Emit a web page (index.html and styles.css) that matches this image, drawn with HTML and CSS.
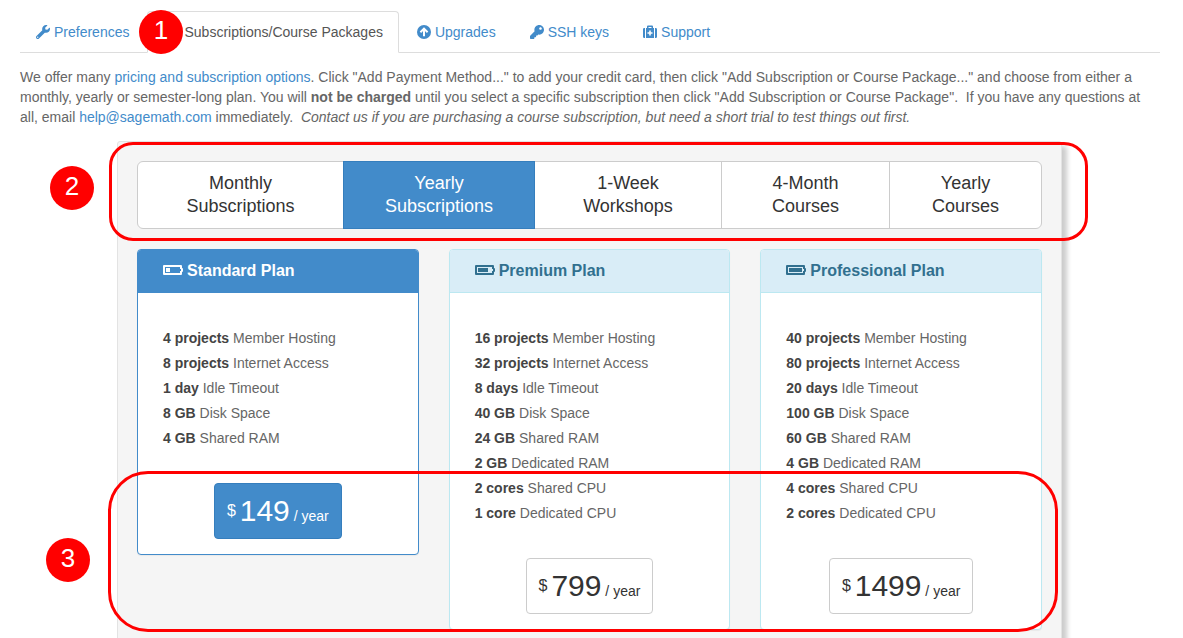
FILE: index.html
```html
<!DOCTYPE html>
<html lang="en">
<head>
<meta charset="utf-8">
<title>Subscriptions/Course Packages</title>
<link rel="stylesheet" href="styles.css">
</head>
<body>
<nav class="tabs">
  <a class="tab" href="#preferences"><svg class="icon" viewBox="0 0 512 512"><path d="M507.73 109.1c-2.24-9.03-13.54-12.09-20.12-5.51l-74.36 74.36-67.88-11.31-11.31-67.88 74.36-74.36c6.62-6.62 3.43-17.9-5.66-20.16-47.38-11.74-99.55.91-136.58 37.93-39.64 39.64-50.55 97.1-34.05 147.2L18.74 402.76c-24.99 24.99-24.99 65.51 0 90.5 24.99 24.99 65.51 24.99 90.5 0l213.21-213.21c50.12 16.71 107.47 5.68 147.37-34.22 37.07-37.07 49.7-89.32 37.91-136.73zM64 472c-13.25 0-24-10.75-24-24 0-13.26 10.75-24 24-24s24 10.74 24 24c0 13.25-10.75 24-24 24z"/></svg>Preferences</a>
  <a class="tab active" href="#subscriptions">Subscriptions/Course Packages</a>
  <a class="tab" href="#upgrades"><svg class="icon" viewBox="0 0 14 14"><circle cx="7" cy="7" r="7"/><path class="cut" d="M7 11.2V4M3.4 7.2L7 3.6l3.600 3.600"/></svg>Upgrades</a>
  <a class="tab" href="#ssh"><svg class="icon" viewBox="0 0 512 512"><path d="M512 176.001C512 273.203 433.202 352 336 352c-11.22 0-22.19-1.062-32.827-3.069l-24.012 27.014A23.999 23.999 0 0 1 261.223 384H224v40c0 13.255-10.745 24-24 24h-40v40c0 13.255-10.745 24-24 24H24c-13.255 0-24-10.745-24-24v-78.059c0-6.365 2.529-12.47 7.029-16.971l161.802-161.802C163.108 213.814 160 195.271 160 176 160 78.798 238.797.001 335.999 0 433.488-.001 512 78.511 512 176.001zM336 128c0 26.51 21.49 48 48 48s48-21.49 48-48-21.49-48-48-48-48 21.49-48 48z"/></svg>SSH keys</a>
  <a class="tab" href="#support"><svg class="icon" viewBox="0 0 14 14"><path fill-rule="evenodd" d="M1.300 3H2v10H1.300Q0 13 0 11.700V4.300Q0 3 1.300 3zM12 3h.7Q14 3 14 4.300v7.400Q14 13 12.700 13H12zM3 3h1V1.500Q4 .5 5 .5h4q1 0 1 1V3h1v10H3zM5.500 3h3V2h-3zM6.200 5.500v1.700H4.500v1.600h1.700v1.700h1.600V8.800h1.700V7.200H7.800V5.500z"/></svg>Support</a>
</nav>

<p class="intro">We offer many <a href="#pricing">pricing and subscription options</a>. Click "Add Payment Method..." to add your credit card, then click "Add Subscription or Course Package..." and choose from either a monthly, yearly or semester-long plan. You will <b>not be charged</b> until you select a specific subscription then click "Add Subscription or Course Package".&nbsp; If you have any questions at all, email <a href="mailto:help@sagemath.com">help@sagemath.com</a> immediately.&nbsp; <i>Contact us if you are purchasing a course subscription, but need a short trial to test things out first.</i></p>

<main class="well">
  <div class="periods">
    <button type="button">Monthly<br>Subscriptions</button>
    <button type="button" class="selected">Yearly<br>Subscriptions</button>
    <button type="button">1-Week<br>Workshops</button>
    <button type="button">4-Month<br>Courses</button>
    <button type="button">Yearly<br>Courses</button>
  </div>

  <div class="plans">
    <section class="plan chosen">
      <h2><svg class="battery" viewBox="0 0 20 10"><path fill-rule="evenodd" d="M1 0h17q1 0 1 1v2q1 0 1 1v2q0 1-1 1v2q0 1-1 1H1Q0 10 0 9V1Q0 0 1 0zM2 2v6h15V6h1V4h-1V2z"/><rect x="3" y="3" width="4" height="4"/></svg>Standard Plan</h2>
      <ul>
        <li><b>4 projects</b> Member Hosting</li>
        <li><b>8 projects</b> Internet Access</li>
        <li><b>1 day</b> Idle Timeout</li>
        <li><b>8 GB</b> Disk Space</li>
        <li><b>4 GB</b> Shared RAM</li>
      </ul>
      <button type="button" class="price"><span class="currency">$</span> <span class="amount">149</span> / year</button>
    </section>
    <section class="plan">
      <h2><svg class="battery" viewBox="0 0 20 10"><path fill-rule="evenodd" d="M1 0h17q1 0 1 1v2q1 0 1 1v2q0 1-1 1v2q0 1-1 1H1Q0 10 0 9V1Q0 0 1 0zM2 2v6h15V6h1V4h-1V2z"/><rect x="3" y="3" width="10" height="4"/></svg>Premium Plan</h2>
      <ul>
        <li><b>16 projects</b> Member Hosting</li>
        <li><b>32 projects</b> Internet Access</li>
        <li><b>8 days</b> Idle Timeout</li>
        <li><b>40 GB</b> Disk Space</li>
        <li><b>24 GB</b> Shared RAM</li>
        <li><b>2 GB</b> Dedicated RAM</li>
        <li><b>2 cores</b> Shared CPU</li>
        <li><b>1 core</b> Dedicated CPU</li>
      </ul>
      <button type="button" class="price"><span class="currency">$</span> <span class="amount">799</span> / year</button>
    </section>
    <section class="plan">
      <h2><svg class="battery" viewBox="0 0 20 10"><path fill-rule="evenodd" d="M1 0h17q1 0 1 1v2q1 0 1 1v2q0 1-1 1v2q0 1-1 1H1Q0 10 0 9V1Q0 0 1 0zM2 2v6h15V6h1V4h-1V2z"/><rect x="3" y="3" width="13" height="4"/></svg>Professional Plan</h2>
      <ul>
        <li><b>40 projects</b> Member Hosting</li>
        <li><b>80 projects</b> Internet Access</li>
        <li><b>20 days</b> Idle Timeout</li>
        <li><b>100 GB</b> Disk Space</li>
        <li><b>60 GB</b> Shared RAM</li>
        <li><b>4 GB</b> Dedicated RAM</li>
        <li><b>4 cores</b> Shared CPU</li>
        <li><b>2 cores</b> Dedicated CPU</li>
      </ul>
      <button type="button" class="price"><span class="currency">$</span> <span class="amount">1499</span> / year</button>
    </section>
  </div>
</main>

<div class="outline outline-periods"></div>
<div class="outline outline-prices"></div>
<span class="step step-one">1</span>
<span class="step step-two">2</span>
<span class="step step-three">3</span>
</body>
</html>
```

FILE: styles.css
```css
* { box-sizing: border-box; }

body {
  position: relative;
  margin: 0;
  padding: 11px 23px 0 20px;
  background: #fff;
  color: #666;
  font: 14px/20px "Liberation Sans", Arial, sans-serif;
}

a { color: #428bca; text-decoration: none; }
button { font: inherit; cursor: pointer; }

/* Tab bar */
.tabs {
  display: flex;
  gap: 2px;
  border-bottom: 1px solid #ddd;
}
.tab {
  display: flex;
  align-items: center;
  margin-bottom: -1px;
  padding: 10px 15px;
  border: 1px solid transparent;
  border-radius: 4px 4px 0 0;
}
.tab.active {
  padding-left: 36px;
  border-color: #ddd #ddd #fff;
  background: #fff;
  color: #555;
}
.icon {
  width: 14px;
  height: 14px;
  margin-right: 4px;
  fill: currentColor;
}
.cut { fill: none; stroke: #fff; stroke-width: 2; }

.intro { margin: 14px 0; }

/* Plan chooser */
.well {
  margin: 0 98px 0 97px;
  padding: 19px;
  border: 1px solid #e3e3e3;
  border-radius: 3px;
  background: #f5f5f5;
  box-shadow: 5px 5px 5px #ccc;
}
.periods {
  display: grid;
  grid-template-columns: 206fr 191fr 187fr 168fr 151fr;
  border: 1px solid #ccc;
  border-radius: 6px;
  background: #fff;
}
.periods button {
  padding: 10px;
  border: 0;
  border-right: 1px solid #ccc;
  background: none;
  color: #333;
  font-size: 18px;
  line-height: 23px;
}
.periods button:last-child { border-right: 0; }
.periods .selected {
  margin: -1px 0 -1px -1px;
  border: 1px solid #357ebd;
  background: #428bca;
  color: #fff;
}

.plans {
  display: grid;
  grid-template-columns: repeat(3, 1fr);
  gap: 30px;
  align-items: start;
  margin-top: 20px;
}
.plan {
  display: flex;
  flex-direction: column;
  padding-bottom: 15px;
  border: 1px solid #bce8f1;
  border-radius: 4px;
  background: #fff;
  box-shadow: 0 1px 1px rgba(0, 0, 0, .05);
}
.plan h2 {
  display: flex;
  align-items: center;
  gap: 4px;
  margin: 0;
  padding: 11px 25px;
  border-bottom: 1px solid #bce8f1;
  border-radius: 3px 3px 0 0;
  background: #d9edf7;
  color: #31708f;
  font-size: 16px;
  line-height: 20px;
}
.battery {
  width: 20px;
  height: 10px;
  margin-bottom: 2px;
  fill: currentColor;
}
.plan ul {
  margin: 33px 25px 32px;
  padding: 0;
  list-style: none;
  line-height: 25px;
}
.plan li b { color: #444; }
.chosen, .chosen h2 { border-color: #428bca; }
.chosen h2 { background: #428bca; color: #fff; }

.price {
  align-self: center;
  padding: 6px 12px;
  border: 1px solid #ccc;
  border-radius: 4px;
  background: #fff;
  color: #333;
  line-height: 20px;
}
.currency { font-size: 16px; vertical-align: 5px; line-height: 1; }
.amount { font-size: 30px; line-height: 42px; }
.chosen .price {
  border-color: #357ebd;
  background: #428bca;
  color: #fff;
}

/* Tour markers drawn over the page */
.outline {
  position: absolute;
  border: 3px solid #f00;
  pointer-events: none;
}
.outline-periods { left: 109px; right: 95px; top: 142px; height: 99px; border-radius: 24px; }
.outline-prices { left: 108px; right: 125px; top: 471px; height: 161px; border-radius: 40px; }
.step {
  position: absolute;
  width: 44px;
  height: 44px;
  border-radius: 50%;
  background: #f00;
  color: #fff;
  font-size: 26px;
  line-height: 40px;
  text-align: center;
}
.step-one { left: 139px; top: 10px; }
.step-two { left: 50px; top: 166px; }
.step-three { left: 46px; top: 538px; }
```
